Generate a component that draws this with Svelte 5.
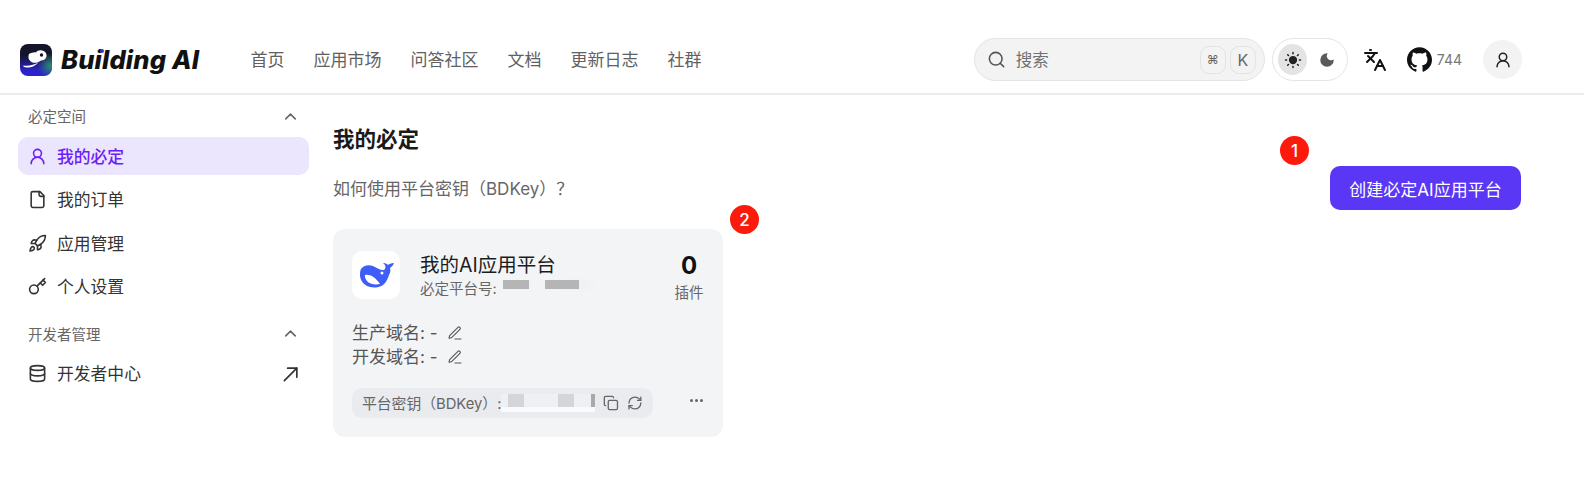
<script lang="ts">
  const icons: Record<string, string> = {
    user: '<circle cx="12" cy="8" r="5"/><path d="M20 21a8 8 0 0 0-16 0"/>',
    file: '<path d="M15 2H6a2 2 0 0 0-2 2v16a2 2 0 0 0 2 2h12a2 2 0 0 0 2-2V7Z"/><path d="M14 2v4a2 2 0 0 0 2 2h4"/>',
    rocket:
      '<path d="M4.5 16.5c-1.5 1.26-2 5-2 5s3.74-.5 5-2c.71-.84.7-2.13-.09-2.91a2.18 2.18 0 0 0-2.91-.09z"/><path d="m12 15-3-3a22 22 0 0 1 2-3.95A12.88 12.88 0 0 1 22 2c0 2.72-.78 7.5-6 11a22.35 22.35 0 0 1-4 2z"/><path d="M9 12H4s.55-3.03 2-4c1.62-1.08 5 0 5 0"/><path d="M12 15v5s3.03-.55 4-2c1.08-1.62 0-5 0-5"/>',
    key: '<circle cx="7.5" cy="15.5" r="5.5"/><path d="m21 2-9.6 9.6"/><path d="m15.5 7.5 3 3L22 7l-3-3"/>',
    database:
      '<ellipse cx="12" cy="5" rx="9" ry="3"/><path d="M3 5v14a9 3 0 0 0 18 0V5"/><path d="M3 12a9 3 0 0 0 18 0"/>',
    up: '<path d="m18 15-6-6-6 6"/>',
    out: '<path d="M8 5h11v11"/><path d="M4 20 19 5"/>',
    search: '<circle cx="11" cy="11" r="8"/><path d="m21 21-4.3-4.3"/>',
    lang: '<path d="m5 8 6 6"/><path d="m4 14 6-6 2-3"/><path d="M2 5h12"/><path d="M7 2h1"/><path d="m22 22-5-10-5 10"/><path d="M14 18h6"/>',
    pencil:
      '<path d="M12 21h9"/><path d="M16.376 3.622a1 1 0 0 1 3.002 3.002L7.368 18.635a2 2 0 0 1-.855.506l-2.872.838a.5.5 0 0 1-.62-.62l.838-2.872a2 2 0 0 1 .506-.854z"/>',
    copy: '<rect x="8" y="8" width="14" height="14" rx="2"/><path d="M4 16c-1.1 0-2-.9-2-2V4c0-1.1.9-2 2-2h10c1.1 0 2 .9 2 2"/>',
    refresh:
      '<path d="M3 12a9 9 0 0 1 9-9 9.75 9.75 0 0 1 6.74 2.74L21 8"/><path d="M21 3v5h-5"/><path d="M21 12a9 9 0 0 1-9 9 9.75 9.75 0 0 1-6.74-2.74L3 16"/><path d="M8 16H3v5"/>',
  };

  const nav = ["首页", "应用市场", "问答社区", "文档", "更新日志", "社群"];

  const spaceItems = [
    { icon: "user", label: "我的必定", active: true },
    { icon: "file", label: "我的订单" },
    { icon: "rocket", label: "应用管理" },
    { icon: "key", label: "个人设置" },
  ];

  const domains = ["生产域名", "开发域名"];
</script>

{#snippet icon(name: string, size = 20, cls = "", weight = 2)}
  <svg class={cls} width={size} height={size} viewBox="0 0 24 24" fill="none" stroke="currentColor" stroke-width={weight} stroke-linecap="round" stroke-linejoin="round">
    {@html icons[name]}
  </svg>
{/snippet}

<div class="page">
  <header class="topbar">
    <a class="brand" href="#top">
      <svg class="logo" width="32" height="32" viewBox="0 0 32 32">
        <defs>
          <linearGradient id="lg" x1="0" y1="0" x2="0" y2="1">
            <stop offset="0.35" stop-color="#14142a" />
            <stop offset="0.8" stop-color="#2a22c4" />
            <stop offset="1" stop-color="#2d24d0" />
          </linearGradient>
          <radialGradient id="lr" cx="0.95" cy="0.68" r="0.4">
            <stop offset="0" stop-color="#2f8a6c" />
            <stop offset="1" stop-color="#2f8a6c" stop-opacity="0" />
          </radialGradient>
        </defs>
        <rect width="32" height="32" rx="8" fill="url(#lg)" />
        <rect width="32" height="32" rx="8" fill="url(#lr)" />
        <path d="M9 10c2-1 5-2 7-1.500 1-1.500 3-2.500 6-2 3 .5 5 3 4.500 6-.5 2.500-3 4-5.500 4-3 2.500-7 3-9.500 1.500-2-1.200-3-3-3-4.500 0-1.500 0-2.800.5-3.500z" fill="#fff" />
        <path d="M3.500 21.500c5 .8 11-.5 15-3-3 3.500-8 5.500-12 5-2.500-.3-3.800-1.200-3-2z" fill="#fff" />
        <circle cx="21.500" cy="11" r="1.700" fill="#14142a" />
      </svg>
      <span class="brand-name">Building AI</span>
      <i class="spark"></i>
    </a>

    <nav class="nav">
      {#each nav as item}
        <a href="#top">{item}</a>
      {/each}
    </nav>

    <div class="tools">
      <div class="search">
        {@render icon("search", 19, "search-icon")}
        <span class="search-label">搜索</span>
        <kbd class="key small">⌘</kbd>
        <kbd class="key">K</kbd>
      </div>

      <div class="theme">
        <span class="theme-btn on">
          <svg width="18" height="18" viewBox="0 0 24 24" fill="#222" stroke="#222" stroke-width="2" stroke-linecap="round">
            <circle cx="12" cy="12" r="4.5" />
            <path d="M12 2v1.500M12 20.500v1.500M2 12h1.500M20.500 12H22M4.900 4.900 6 6M18 18l1.100 1.100M4.900 19.100 6 18M18 6l1.100-1.100" />
          </svg>
        </span>
        <span class="theme-btn">
          <svg width="18" height="18" viewBox="0 0 24 24" fill="#5a5a5a">
            <path d="M12 3a9 9 0 1 0 9 9c0-.5-.6-.8-1-.5a5.500 5.500 0 0 1-7.500-7.500c.3-.4 0-1-.5-1z" />
          </svg>
        </span>
      </div>

      <span class="lang">{@render icon("lang", 24)}</span>

      <div class="github">
        <svg width="25" height="25" viewBox="0 0 24 24" fill="#111">
          <path d="M12 .297c-6.630 0-12 5.373-12 12 0 5.303 3.438 9.800 8.205 11.385.6.113.82-.258.82-.577 0-.285-.01-1.040-.015-2.040-3.338.724-4.042-1.610-4.042-1.610C4.422 18.070 3.633 17.700 3.633 17.700c-1.087-.744.084-.729.084-.729 1.205.084 1.838 1.236 1.838 1.236 1.070 1.835 2.809 1.305 3.495.998.108-.776.417-1.305.76-1.605-2.665-.3-5.466-1.332-5.466-5.930 0-1.310.465-2.380 1.235-3.220-.135-.303-.54-1.523.105-3.176 0 0 1.005-.322 3.300 1.230.96-.267 1.980-.399 3-.405 1.020.006 2.040.138 3 .405 2.280-1.552 3.285-1.230 3.285-1.230.645 1.653.24 2.873.12 3.176.765.84 1.230 1.910 1.230 3.220 0 4.610-2.805 5.625-5.475 5.920.42.36.81 1.096.81 2.220 0 1.606-.015 2.896-.015 3.286 0 .315.21.69.825.57C20.565 22.092 24 17.592 24 12.297c0-6.627-5.373-12-12-12" />
        </svg>
        <span>744</span>
      </div>

      <span class="avatar">{@render icon("user", 18)}</span>
    </div>
  </header>

  <div class="body">
    <aside class="sidebar">
      <div class="group-head">
        <span>必定空间</span>
        {@render icon("up", 19)}
      </div>
      <ul class="menu">
        {#each spaceItems as item}
          <li class:active={item.active}>
            {@render icon(item.icon, 19)}
            <span>{item.label}</span>
          </li>
        {/each}
      </ul>

      <div class="group-head second">
        <span>开发者管理</span>
        {@render icon("up", 19)}
      </div>
      <ul class="menu">
        <li>
          {@render icon("database", 19)}
          <span>开发者中心</span>
          {@render icon("out", 20, "end")}
        </li>
      </ul>
    </aside>

    <main class="main">
      <h1>我的必定</h1>
      <div class="intro">
        <span class="help">如何使用平台密钥（BDKey）？</span>
        <button class="create">
          创建必定AI应用平台
          <span class="badge one">1</span>
        </button>
      </div>

      <section class="card">
        <span class="badge two">2</span>
        <div class="card-top">
          <span class="app-icon">
            <svg width="35" height="26" viewBox="0 0 35 26" fill="#3f5ef8">
              <path d="M2 7C4 4 9 2 14 4c4 2 7 4 10 4 2 0 3-2 2-5l-2-2c3 0 4 1 5 2 1-1 3-2 6-2-1 3-3 4-4 5 1 3 0 5-1 7-2 7-6 12-13 12.500C9 26 2 22 1 14c0-3 0-5 1-7z" />
              <path d="M6 13c5-1 10 2 15 9-5 1-11 0-13-3-1.500-2-2.500-4-2-6z" fill="#fff" />
              <circle cx="23" cy="11" r="1.500" fill="#fff" />
            </svg>
          </span>
          <div class="app-info">
            <div class="app-name">我的AI应用平台</div>
            <div class="app-no">
              必定平台号:
              <i class="mask g1"></i>
              <i class="mask g2"></i>
            </div>
          </div>
          <div class="stat">
            <b>0</b>
            <span>插件</span>
          </div>
        </div>

        <div class="domains">
          {#each domains as d}
            <div class="domain">
              <span>{d}: -</span>
              {@render icon("pencil", 16, "", 1.6)}
            </div>
          {/each}
        </div>

        <div class="card-foot">
          <div class="secret">
            <span class="secret-label">平台密钥（BDKey）:</span>
            <span class="secret-mask">
              <i></i>
              <i></i>
              <i class="thin"></i>
            </span>
            {@render icon("copy", 16)}
            {@render icon("refresh", 16)}
          </div>
          <span class="more"><i></i><i></i><i></i></span>
        </div>
      </section>
    </main>
  </div>
</div>

<style>
  :global(body) {
    margin: 0;
    background: #fff;
  }
  .page {
    width: 1584px;
    height: 492px;
    overflow: hidden;
    font-family: Inter, "Noto Sans CJK SC", sans-serif;
    color: #262626;
  }

  .topbar {
    display: flex;
    align-items: center;
    height: 67px;
    padding: 26px 62px 0 20px;
    border-bottom: 2px solid #ececec;
  }
  .brand {
    position: relative;
    display: flex;
    align-items: center;
    gap: 9px;
    width: 230.5px;
    text-decoration: none;
    color: #111;
  }
  .logo {
    flex: none;
  }
  .brand-name {
    font-size: 25.500px;
    font-weight: 800;
    font-style: italic;
    letter-spacing: 0.2px;
  }
  .spark {
    position: absolute;
    left: 80px;
    top: 5px;
    width: 4px;
    height: 4px;
    border-radius: 50%;
    background: #2a3bd0;
  }
  .nav {
    display: flex;
    gap: 29px;
    margin-top: -2px;
  }
  .nav a {
    color: #616161;
    font-size: 17px;
    text-decoration: none;
  }

  .tools {
    display: flex;
    align-items: center;
    margin-left: auto;
  }
  .search {
    display: flex;
    align-items: center;
    width: 291px;
    height: 43px;
    box-sizing: border-box;
    padding: 0 8px 0 12px;
    gap: 4px;
    background: #f3f3f3;
    border: 1px solid #e4e4e4;
    border-radius: 22px;
    color: #555;
  }
  .search-label {
    margin-left: 6px;
    margin-right: auto;
    margin-top: -2px;
    font-size: 16.500px;
    color: #717171;
  }
  .key {
    display: flex;
    align-items: center;
    justify-content: center;
    width: 26px;
    height: 28px;
    box-sizing: border-box;
    border: 1px solid #e3e3e3;
    border-radius: 9px;
    font-family: Inter, "DejaVu Sans", sans-serif;
    font-size: 16px;
    color: #666;
  }
  .key.small {
    font-size: 12px;
  }
  .theme {
    display: flex;
    align-items: center;
    width: 76px;
    height: 43px;
    box-sizing: border-box;
    margin-left: 7px;
    padding: 0 5px;
    border: 1px solid #e4e4e4;
    border-radius: 22px;
    gap: 5px;
  }
  .theme-btn {
    display: flex;
    align-items: center;
    justify-content: center;
    width: 31px;
    height: 31px;
    border-radius: 50%;
  }
  .theme-btn.on {
    background: #e4e4e4;
  }
  .lang {
    display: flex;
    margin-left: 15px;
    color: #111;
  }
  .github {
    display: flex;
    align-items: center;
    gap: 5px;
    margin-left: 20px;
    font-size: 14px;
    color: #777;
  }
  .avatar {
    display: flex;
    align-items: center;
    justify-content: center;
    width: 39px;
    height: 39px;
    margin-left: 21px;
    background: #f3f3f3;
    border-radius: 50%;
    color: #222;
  }

  .body {
    display: flex;
  }
  .sidebar {
    flex: none;
    width: 291px;
    margin-left: 18px;
    padding-top: 3px;
  }
  .group-head {
    display: flex;
    align-items: center;
    justify-content: space-between;
    height: 36px;
    margin-bottom: 3px;
    padding: 0 9px 0 10px;
    font-size: 14.500px;
    color: #666;
  }
  .group-head span {
    margin-top: -2px;
  }
  .group-head.second {
    margin-top: 10px;
  }
  .group-head.second span {
    margin-top: 0;
  }
  .menu {
    display: flex;
    flex-direction: column;
    gap: 5.500px;
    margin: 0;
    padding: 0;
    list-style: none;
  }
  .menu li {
    display: flex;
    align-items: center;
    gap: 10px;
    height: 38px;
    padding: 0 10px;
    border-radius: 10px;
    font-size: 16.800px;
    color: #333;
  }
  .menu li span {
    margin-top: -1px;
  }
  .menu li.active {
    background: #ebe5fd;
    color: #6b21f5;
    font-weight: 500;
  }
  .menu :global(.end) {
    margin-left: auto;
    margin-right: -2px;
  }

  .main {
    flex: 1;
    padding: 29px 63px 0 24px;
  }
  h1 {
    margin: 0 0 11px;
    font-size: 21.500px;
    line-height: 31px;
    font-weight: 600;
    color: #1a1a1a;
  }
  .intro {
    display: flex;
    align-items: center;
    justify-content: space-between;
    margin-bottom: 19px;
  }
  .help {
    margin-top: -2px;
    font-size: 17px;
    color: #666;
  }
  .create {
    position: relative;
    height: 44px;
    width: 191px;
    padding: 0;
    border: none;
    border-radius: 10px;
    background: #5a37f5;
    color: #fff;
    font: inherit;
    font-size: 17px;
  }
  .badge {
    position: absolute;
    display: flex;
    align-items: center;
    justify-content: center;
    width: 29px;
    height: 29px;
    border-radius: 50%;
    background: #fb1a0c;
    color: #fff;
    font-size: 17px;
    font-weight: 500;
  }
  .badge.one {
    left: -50px;
    top: -30px;
  }
  .badge.two {
    right: -36px;
    top: -24px;
  }

  .card {
    position: relative;
    width: 390px;
    height: 208px;
    box-sizing: border-box;
    padding: 22px 19px 0;
    background: #f3f4f6;
    border-radius: 12px;
  }
  .card-top {
    display: flex;
    align-items: flex-start;
    height: 48px;
  }
  .app-icon {
    display: flex;
    align-items: center;
    justify-content: center;
    flex: none;
    width: 48px;
    height: 48px;
    background: #fff;
    border-radius: 10px;
  }
  .app-info {
    flex: 1;
    margin-left: 20px;
    margin-top: 0.500px;
  }
  .app-name {
    font-size: 19.500px;
    line-height: 27px;
    color: #1c1c1c;
  }
  .app-no {
    display: flex;
    align-items: center;
    height: 20px;
    margin-top: -1.500px;
    font-size: 14.500px;
    color: #666;
  }
  .mask {
    height: 9px;
    margin-top: -5px;
    background: #b5b5b5;
  }
  .mask.g1 {
    width: 26px;
    margin-left: 6px;
  }
  .mask.g2 {
    width: 34px;
    margin-left: 16px;
    box-shadow: 14px 0 6px -2px #eeeeee;
  }
  .stat {
    display: flex;
    flex-direction: column;
    align-items: center;
    width: 36px;
    margin-right: -3px;
    font-size: 14.500px;
    color: #666;
  }
  .stat b {
    font-size: 24px;
    line-height: 30px;
    color: #111;
  }
  .domains {
    margin-top: 22px;
    font-size: 17px;
    line-height: 24px;
    color: #555;
  }
  .domain {
    display: flex;
    align-items: center;
    gap: 9px;
  }
  .card-foot {
    display: flex;
    align-items: center;
    justify-content: space-between;
    margin-top: 19px;
  }
  .secret {
    display: flex;
    align-items: center;
    gap: 8px;
    width: 301px;
    height: 30px;
    box-sizing: border-box;
    padding: 0 10px;
    background: #e9ebef;
    border-radius: 10px;
    font-size: 14.800px;
    color: #666;
  }
  .secret-label {
    flex: none;
    margin-top: -2px;
    white-space: nowrap;
  }
  .secret-mask {
    display: flex;
    flex: none;
    width: 94px;
    height: 18px;
    margin-left: -8px;
    background: linear-gradient(#eef0f3 70%, #fafafa 70%);
  }
  .secret-mask i {
    width: 16px;
    height: 13px;
    margin-left: 34px;
    background: #d3d5d9;
  }
  .secret-mask i:first-child {
    margin-left: 7px;
  }
  .secret-mask i.thin {
    width: 5px;
    margin-left: 17px;
    background: #a9a9a9;
  }
  .more {
    display: flex;
    gap: 2px;
    margin-right: 1px;
    margin-top: -5px;
  }
  .more i {
    width: 3px;
    height: 3px;
    border-radius: 50%;
    background: #666;
  }
</style>
